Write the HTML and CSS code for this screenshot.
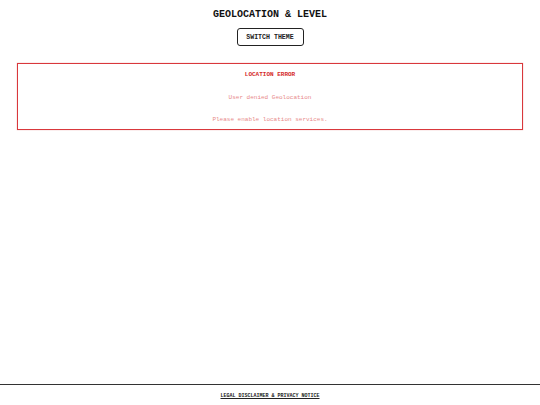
FILE: index.html
```html
<!DOCTYPE html>
<html>
<head>
<meta charset="utf-8">
<link rel="stylesheet" href="styles.css">
</head>
<body>
<div class="page">
  <main class="main">
    <h1 class="title">GEOLOCATION &amp; LEVEL</h1>
    <button class="theme-btn">SWITCH THEME</button>
    <section class="error-box">
      <h2 class="error-title">LOCATION ERROR</h2>
      <p class="error-msg">User denied Geolocation</p>
      <p class="error-msg">Please enable location services.</p>
    </section>
  </main>
  <footer class="footer">
    <a class="footer-link" href="#">LEGAL DISCLAIMER &amp; PRIVACY NOTICE</a>
  </footer>
</div>
</body>
</html>
```
FILE: styles.css
```css
* { box-sizing: border-box; }
html, body { margin: 0; padding: 0; background: #fff; }
body {
  font-family: "Liberation Mono", "Courier New", monospace;
  color: #222;
}
.page {
  height: 405px;
  display: flex;
  flex-direction: column;
}
.main {
  flex: 1;
  display: flex;
  flex-direction: column;
  align-items: center;
  padding: 9px 17px 0;
}
.title {
  margin: 0;
  font-size: 10px;
  line-height: 12px;
  font-weight: bold;
  color: #111;
}
.theme-btn {
  margin-top: 7px;
  height: 18px;
  width: 67px;
  padding: 0;
  font-family: inherit;
  font-size: 6.6px;
  font-weight: bold;
  color: #222;
  background: #fff;
  border: 1.3px solid #222;
  border-radius: 3px;
}
.error-box {
  margin-top: 17px;
  width: 100%;
  height: 67px;
  border: 1.3px solid #d9383c;
  box-shadow: 0 0 1px rgba(220, 60, 60, 0.5);
  display: flex;
  flex-direction: column;
  align-items: center;
  padding-top: 7px;
}
.error-title {
  margin: 0;
  font-size: 6px;
  line-height: 8px;
  font-weight: bold;
  color: #d42a2a;
}
.error-msg {
  margin: 14.5px 0 0;
  font-size: 6px;
  line-height: 8px;
  color: #e88a8a;
}
.footer {
  border-top: 1.3px solid #333;
  height: 21px;
  display: flex;
  justify-content: center;
  padding-top: 8px;
}
.footer-link {
  font-size: 5px;
  line-height: 7px;
  font-weight: bold;
  color: #222;
  text-decoration: underline;
}
```
